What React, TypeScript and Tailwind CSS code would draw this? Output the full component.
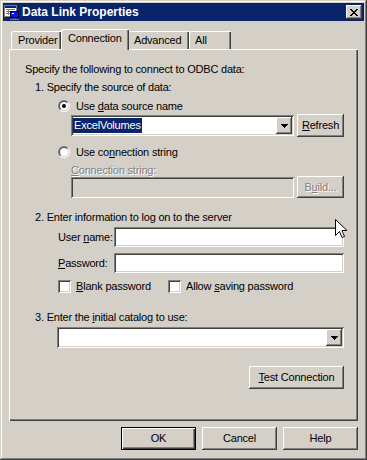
import React from "react";

const RAISED =
  "bg-[#d4d0c8] shadow-[inset_-1px_-1px_#404040,inset_1px_1px_#ffffff,inset_-2px_-2px_#808080,inset_2px_2px_#d4d0c8]";
const SUNKEN =
  "shadow-[inset_1px_1px_#808080,inset_-1px_-1px_#ffffff,inset_2px_2px_#404040,inset_-2px_-2px_#d4d0c8]";
const DEFAULT_BTN =
  "bg-[#d4d0c8] shadow-[inset_0_0_0_1px_#000000,inset_2px_2px_#ffffff,inset_-2px_-2px_#404040,inset_-3px_-3px_#808080]";
const DISABLED = "text-[#808080] [text-shadow:1px_1px_0_#ffffff]";

function U({ children }: { children: React.ReactNode }) {
  return <span className="underline">{children}</span>;
}

function Radio({ checked }: { checked?: boolean }) {
  return (
    <div className="w-[12px] h-[12px] shrink-0 rounded-full border border-t-[#808080] border-l-[#808080] border-b-white border-r-white flex">
      <div className="flex-1 rounded-full border border-t-[#404040] border-l-[#404040] border-b-[#d4d0c8] border-r-[#d4d0c8] bg-white flex items-center justify-center">
        {checked && <div className="w-[4px] h-[4px] rounded-full bg-black" />}
      </div>
    </div>
  );
}

function Check() {
  return <div className={`w-[13px] h-[13px] shrink-0 bg-white ${SUNKEN}`} />;
}

function DropBtn() {
  return (
    <div className={`w-[16px] h-[17px] shrink-0 flex items-center justify-center ${RAISED}`}>
      <svg width="7" height="4" viewBox="0 0 7 4" shapeRendering="crispEdges">
        <path d="M0 0h7v1H0zM1 1h5v1H1zM2 2h3v1H2zM3 3h1v1H3z" fill="#000" />
      </svg>
    </div>
  );
}

function TitleIcon() {
  return (
    <svg width="16" height="16" viewBox="0 0 16 16" shapeRendering="crispEdges">
      <rect x="0" y="1" width="13" height="12" fill="#808080" />
      <rect x="1" y="2" width="11" height="10" fill="#ffffff" />
      <rect x="1" y="2" width="11" height="2" fill="#0a246a" />
      <rect x="2" y="5" width="9" height="1" fill="#808080" />
      <rect x="2" y="7" width="4" height="1" fill="#808080" />
      <rect x="2" y="9" width="4" height="1" fill="#808080" />
      <rect x="4" y="5" width="1" height="6" fill="#808080" />
      <rect x="6" y="7" width="9" height="7" fill="#000000" />
      <rect x="7" y="8" width="7" height="5" fill="#1010ff" />
      <rect x="8" y="9" width="2" height="1" fill="#ffffff" />
      <rect x="9" y="14" width="3" height="1" fill="#404040" />
      <rect x="6" y="15" width="9" height="1" fill="#808080" />
      <rect x="13" y="15" width="1" height="1" fill="#00c000" />
    </svg>
  );
}

function CloseX() {
  return (
    <svg width="8" height="7" viewBox="0 0 8 7" shapeRendering="crispEdges">
      <path
        d="M0 0h2v1H0zM6 0h2v1H6zM1 1h2v1H1zM5 1h2v1H5zM2 2h4v1H2zM3 3h2v1H3zM2 4h4v1H2zM1 5h2v1H1zM5 5h2v1H5zM0 6h2v1H0zM6 6h2v1H6z"
        fill="#000"
      />
    </svg>
  );
}

function Cursor() {
  return (
    <svg width="13" height="21" viewBox="0 0 13 21" className="absolute left-[335px] top-[219px]">
      <path
        d="M0.5 0.5 L0.5 16.5 L4.5 12.5 L7 18.5 L9.5 17.5 L7 11.5 L12 11.5 Z"
        fill="#ffffff"
        stroke="#000000"
        strokeWidth="1"
        strokeLinejoin="miter"
      />
    </svg>
  );
}

export default function App() {
  return (
    <div className="relative w-[367px] h-[460px] p-[3px] bg-[#d4d0c8] flex flex-col font-['Liberation_Sans',Arial,sans-serif] text-[11px] leading-[13px] tracking-[-0.2px] whitespace-nowrap text-black shadow-[inset_-1px_-1px_#404040,inset_1px_1px_#d4d0c8,inset_-2px_-2px_#808080,inset_2px_2px_#ffffff]">
      {/* Title bar */}
      <div className="h-[18px] shrink-0 bg-[#0a246a] flex items-center">
        <div className="ml-[1px] w-[16px] h-[16px]">
          <TitleIcon />
        </div>
        <span className="ml-[2px] text-white font-bold text-[12px] leading-[14px] tracking-normal">Data Link Properties</span>
        <div className={`ml-auto mr-[2px] w-[16px] h-[14px] flex items-center justify-center ${RAISED}`}>
          <CloseX />
        </div>
      </div>

      {/* Client */}
      <div className="flex-1 px-[6px] flex flex-col">
        {/* Tabs */}
        <div className="mt-[8px] h-[20px] pl-[2px] flex items-start">
          <div className="mt-[2px] h-[18px] w-[50px] pl-[7px] pt-[3px] rounded-tl-[2px] shadow-[inset_1px_1px_#ffffff,inset_-1px_0_#404040,inset_-2px_0_#808080]">
            Provider
          </div>
          <div className="relative z-10 h-[21px] w-[68px] pl-[7px] pt-[3px] bg-[#d4d0c8] rounded-tl-[2px] shadow-[inset_1px_1px_#ffffff,inset_-1px_0_#404040,inset_-2px_0_#808080]">
            Connection
          </div>
          <div className="mt-[2px] h-[18px] w-[60px] pl-[5px] pt-[3px] shadow-[inset_0_1px_#ffffff,inset_-1px_0_#404040,inset_-2px_0_#808080]">
            Advanced
          </div>
          <div className="mt-[2px] h-[18px] w-[42px] pl-[6px] pt-[3px] rounded-tl-[2px] shadow-[inset_1px_1px_#ffffff,inset_-1px_0_#404040,inset_-2px_0_#808080]">
            All
          </div>
        </div>

        {/* Panel */}
        <div className="h-[372px] shrink-0 flex flex-col shadow-[inset_1px_1px_#ffffff,inset_-1px_-1px_#404040,inset_-2px_-2px_#808080]">
          <div className="mt-[14px] h-[13px] ml-[16px]">Specify the following to connect to ODBC data:</div>
          <div className="mt-[5px] h-[13px] ml-[26px]">1. Specify the source of data:</div>

          <div className="mt-[5px] h-[14px] ml-[49px] flex items-center">
            <Radio checked />
            <span className="ml-[6px] pt-[1px]">
              Use <U>d</U>ata source name
            </span>
          </div>

          <div className="mt-[1px] h-[23px] ml-[62px] flex items-center">
            <div className={`w-[223px] h-[21px] p-[2px] bg-white flex items-center ${SUNKEN}`}>
              <div className="flex-1 h-full flex items-center">
                <span className="bg-[#0a246a] text-white h-[15px] leading-[15px] px-[1px]">ExcelVolumes</span>
              </div>
              <DropBtn />
            </div>
            <div className={`ml-[3px] w-[47px] h-[23px] flex items-center justify-center ${RAISED}`}>
              <span>
                <U>R</U>efresh
              </span>
            </div>
          </div>

          <div className="mt-[8px] h-[14px] ml-[49px] flex items-center">
            <Radio />
            <span className="ml-[6px] pt-[1px]">
              Use co<U>n</U>nection string
            </span>
          </div>

          <div className={`mt-[5px] h-[12px] leading-[12px] ml-[62px] ${DISABLED}`}>
            <U>C</U>onnection string:
          </div>

          <div className="h-[22px] ml-[62px] flex items-center">
            <div className={`w-[223px] h-[21px] bg-[#d4d0c8] ${SUNKEN}`} />
            <div className={`ml-[3px] w-[47px] h-[22px] flex items-center justify-center ${RAISED}`}>
              <span className={DISABLED}>
                B<U>u</U>ild...
              </span>
            </div>
          </div>

          <div className="mt-[13px] h-[13px] ml-[26px]">2. Enter information to log on to the server</div>

          <div className="mt-[3px] h-[20px] ml-[49px] flex items-center">
            <span className="w-[56px] shrink-0">
              User <U>n</U>ame:
            </span>
            <div className={`w-[230px] h-[20px] bg-white ${SUNKEN}`} />
          </div>

          <div className="mt-[6px] h-[20px] ml-[49px] flex items-center">
            <span className="w-[56px] shrink-0">
              <U>P</U>assword:
            </span>
            <div className={`w-[230px] h-[20px] bg-white ${SUNKEN}`} />
          </div>

          <div className="mt-[6px] h-[14px] ml-[49px] flex items-center">
            <div className="w-[110px] flex items-center">
              <Check />
              <span className="ml-[5px]">
                <U>B</U>lank password
              </span>
            </div>
            <div className="flex items-center">
              <Check />
              <span className="ml-[5px]">
                Allow <U>s</U>aving password
              </span>
            </div>
          </div>

          <div className="mt-[18px] h-[13px] ml-[26px]">
            3. Enter the <U>i</U>nitial catalog to use:
          </div>

          <div className="mt-[3px] h-[21px] ml-[48px] flex">
            <div className={`w-[287px] h-[21px] p-[2px] bg-white flex items-center ${SUNKEN}`}>
              <div className="flex-1" />
              <DropBtn />
            </div>
          </div>

          <div className="mt-[18px] h-[23px] ml-[240px] flex">
            <div className={`w-[95px] h-[23px] flex items-center justify-center ${RAISED}`}>
              <span>
                <U>T</U>est Connection
              </span>
            </div>
          </div>
        </div>

        {/* Bottom buttons */}
        <div className="mt-[6px] flex justify-end gap-[6px]">
          <div className={`w-[75px] h-[23px] flex items-center justify-center ${DEFAULT_BTN}`}>OK</div>
          <div className={`w-[75px] h-[23px] flex items-center justify-center ${RAISED}`}>Cancel</div>
          <div className={`w-[75px] h-[23px] flex items-center justify-center ${RAISED}`}>Help</div>
        </div>
      </div>

      <Cursor />
    </div>
  );
}
